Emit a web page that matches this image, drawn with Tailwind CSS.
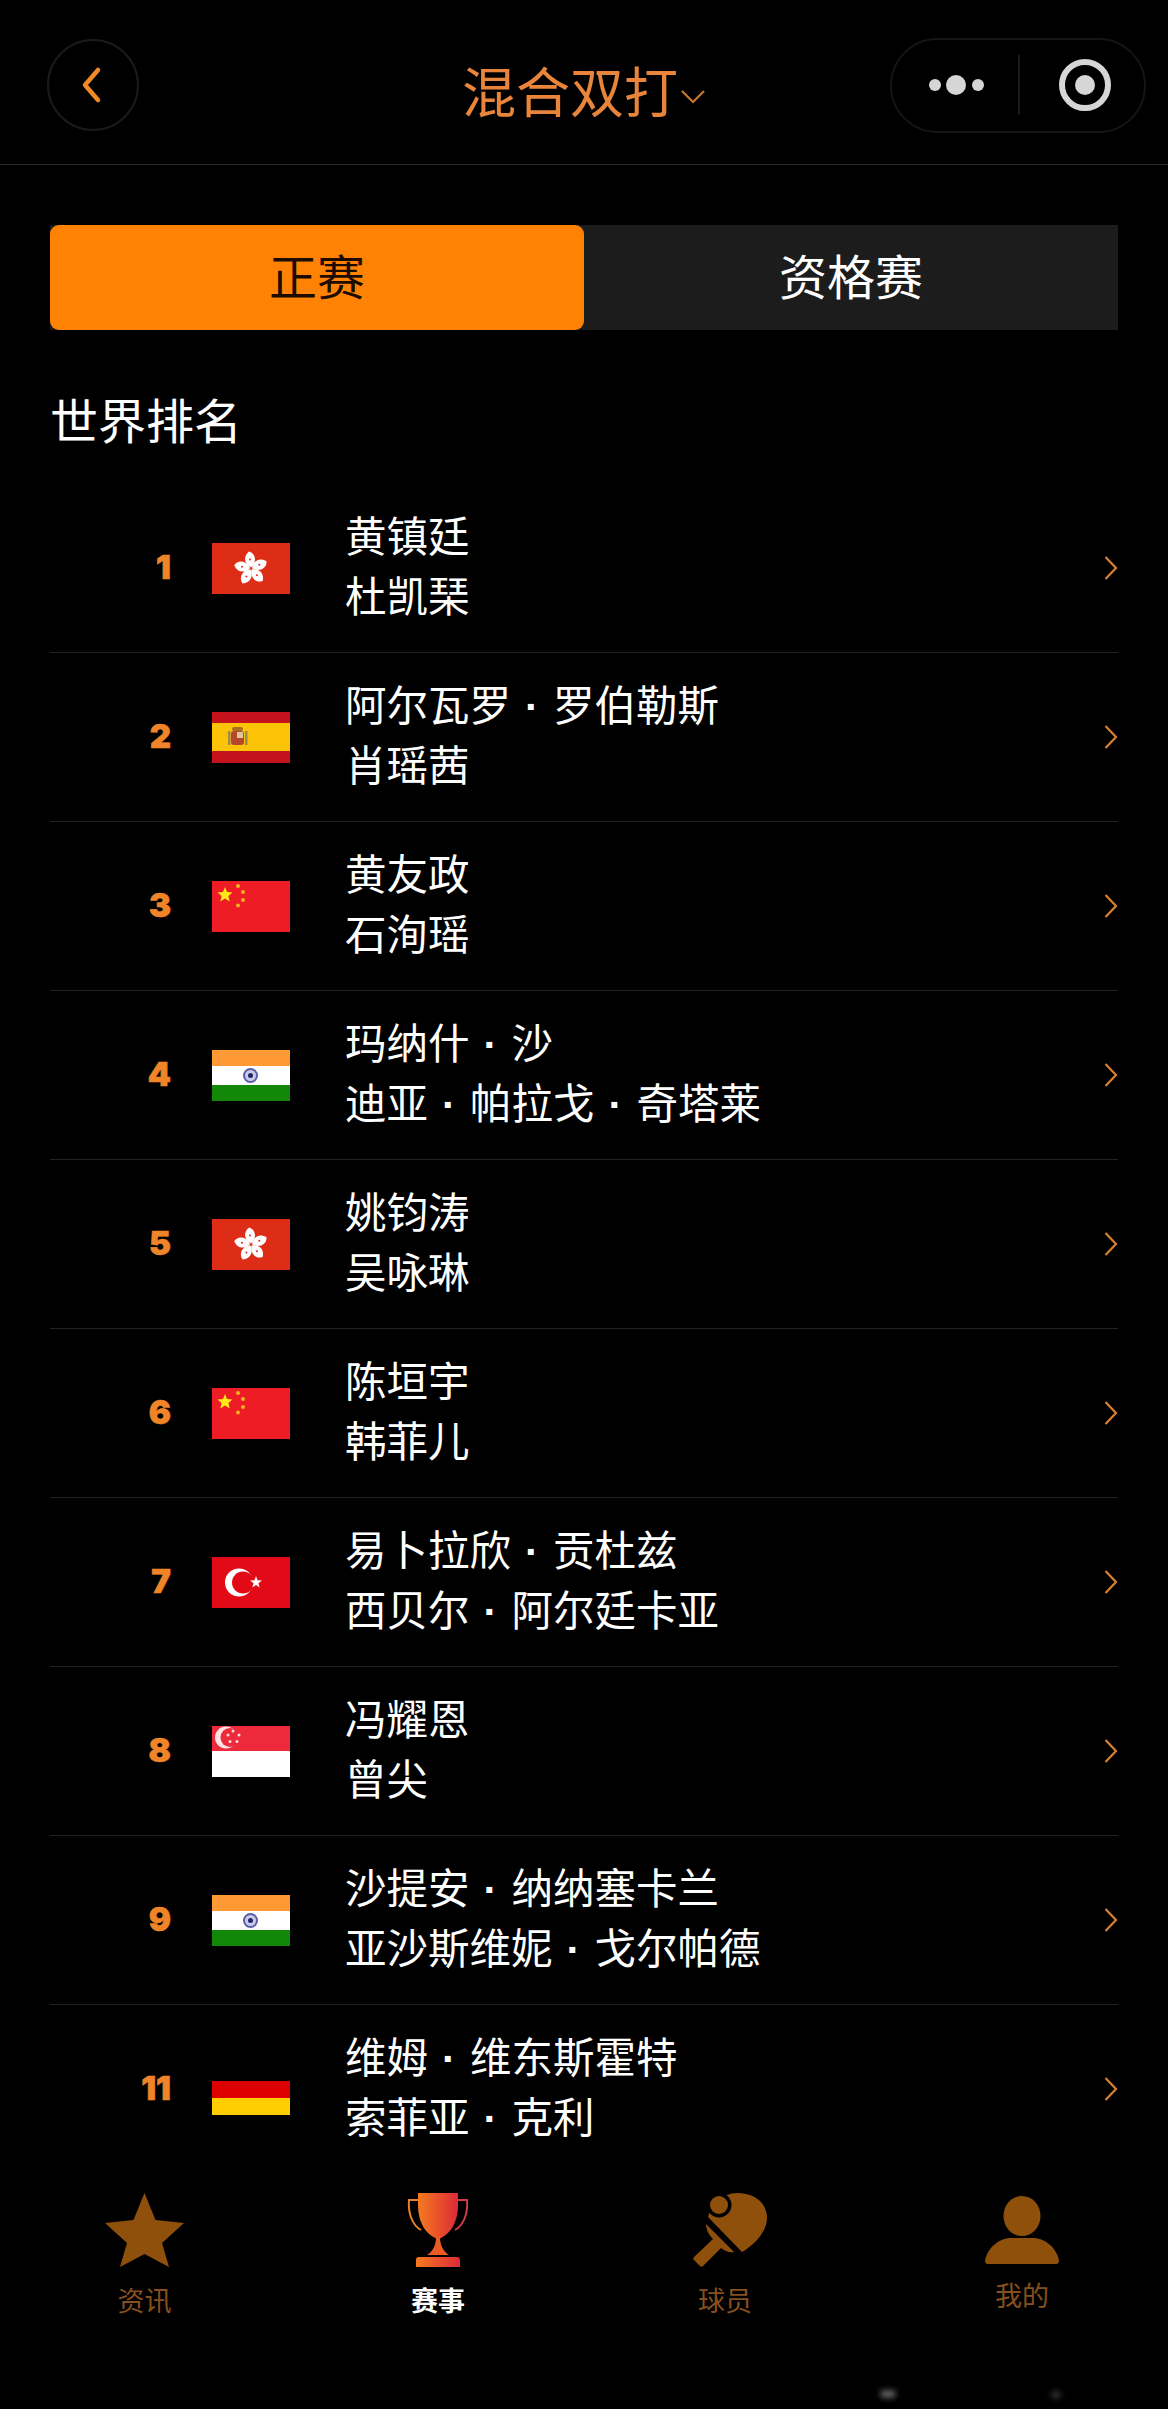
<!DOCTYPE html>
<html lang="zh-CN">
<head>
<meta charset="utf-8">
<script src="https://cdn.jsdelivr.net/npm/@tailwindcss/browser@4"></script>
</head>
<body class="bg-black">
<div class="w-[1168px] h-[2409px] bg-black flex flex-col overflow-hidden font-['Noto_Sans_CJK_SC','Noto_Sans',sans-serif] text-white">

  <!-- nav -->
  <header class="h-[165px] shrink-0 border-b border-[#2a2a2a] flex items-center justify-between pl-[47px] pr-[22px] pt-[6px] relative">
    <div class="w-[92px] h-[92px] rounded-full border-2 border-[#1a1a1a] flex items-center justify-center">
      <svg width="24" height="38" viewBox="0 0 24 38" fill="none"><path d="M17 4 4 19l13 15" stroke="#f08a24" stroke-width="4.5" stroke-linecap="round" stroke-linejoin="round"/></svg>
    </div>
    <div class="absolute left-[462px] top-[56px] flex items-center">
      <span class="text-[54px] leading-[68px] text-[#e8853a]">混合双打</span>
      <svg class="mt-[12px] ml-[2px]" width="26" height="16" viewBox="0 0 26 16" fill="none"><path d="M2 3 13 14 24 3" stroke="#c9762f" stroke-width="2.2"/></svg>
    </div>
    <div class="w-[256px] h-[95px] rounded-[48px] border-2 border-[#151515] flex items-center">
      <svg class="ml-[36px]" width="60" height="24" viewBox="0 0 60 24"><circle cx="7" cy="12" r="6" fill="#d6d6d6"/><circle cx="28" cy="12" r="10" fill="#d6d6d6"/><circle cx="50" cy="12" r="6" fill="#d6d6d6"/></svg>
      <div class="ml-[30px] w-[2px] h-[60px] bg-[#1a1a1a]"></div>
      <svg class="ml-[38px]" width="54" height="54" viewBox="0 0 54 54"><circle cx="27" cy="27" r="23" fill="none" stroke="#d6d6d6" stroke-width="6"/><circle cx="27" cy="27" r="10" fill="#d6d6d6"/></svg>
    </div>
  </header>

  <main class="flex-1 overflow-hidden px-[50px] pt-[60px]">
    <!-- tabs -->
    <div class="h-[105px] flex bg-[#1c1c1c] text-[48px]">
      <div class="w-[534px] rounded-[9px] bg-[#ff8205] text-[#1c0c00] flex items-center justify-center pb-[7px]">正赛</div>
      <div class="flex-1 flex items-center justify-center text-white pb-[7px]">资格赛</div>
    </div>
    <h2 class="mt-[56px] h-[64px] text-[48px] leading-[64px] font-normal">世界排名</h2>

    <ul class="mt-[34px]">
      <!-- 1 -->
      <li class="h-[169px] border-b border-[#222222] flex items-center">
        <span class="w-[121px] text-right text-[33px] font-black text-[#ef8428] [-webkit-text-stroke:0.6px_#ef8428] font-['Inter',sans-serif]">1</span>
        <svg class="ml-[41px] shrink-0" width="78" height="51" viewBox="0 0 78 51"><rect width="78" height="51" fill="#de2d16"/><g transform="translate(39 25.5)"><path d="M0-1C-7-5-8-12-2-17 5-15 6-6 0-1Z" fill="#fff"/><path transform="rotate(72)" d="M0-1C-7-5-8-12-2-17 5-15 6-6 0-1Z" fill="#fff"/><path transform="rotate(144)" d="M0-1C-7-5-8-12-2-17 5-15 6-6 0-1Z" fill="#fff"/><path transform="rotate(216)" d="M0-1C-7-5-8-12-2-17 5-15 6-6 0-1Z" fill="#fff"/><path transform="rotate(288)" d="M0-1C-7-5-8-12-2-17 5-15 6-6 0-1Z" fill="#fff"/><circle cx="-1" cy="-9" r="1" fill="#de2d16"/><circle cx="8.3" cy="-3.700" r="1" fill="#de2d16"/><circle cx="6" cy="6.800" r="1" fill="#de2d16"/><circle cx="-4.600" cy="8" r="1" fill="#de2d16"/><circle cx="-9" cy="-1.800" r="1" fill="#de2d16"/></g></svg>
        <div class="ml-[55px] flex-1 text-[41.5px] leading-[60px] mt-[-8px]"><p>黄镇廷</p><p>杜凯琹</p></div>
        <svg width="14" height="26" viewBox="0 0 14 26" fill="none"><path d="M1.500 2 12 13 1.500 24" stroke="#d8822f" stroke-width="2.200"/></svg>
      </li>
      <!-- 2 -->
      <li class="h-[169px] border-b border-[#222222] flex items-center">
        <span class="w-[121px] text-right text-[33px] font-black text-[#ef8428] [-webkit-text-stroke:0.6px_#ef8428] font-['Inter',sans-serif]">2</span>
        <svg class="ml-[41px] shrink-0" width="78" height="51" viewBox="0 0 78 51"><rect width="78" height="51" fill="#c4131c"/><rect y="11" width="78" height="28" fill="#fcc307"/><rect x="19" y="19" width="13" height="14" rx="3" fill="#b5482a"/><rect x="25" y="20" width="6" height="6" fill="#d9c7a0"/><rect x="20" y="15" width="11" height="4" rx="2" fill="#a8701e"/><rect x="16" y="19" width="2.500" height="14" fill="#9a8a55"/><rect x="33" y="19" width="2.500" height="14" fill="#9a8a55"/></svg>
        <div class="ml-[55px] flex-1 text-[41.5px] leading-[60px] mt-[-8px]"><p>阿尔瓦罗<span class="inline-block w-[42px] text-center leading-none font-bold font-['Liberation_Sans']">·</span>罗伯勒斯</p><p>肖瑶茜</p></div>
        <svg width="14" height="26" viewBox="0 0 14 26" fill="none"><path d="M1.500 2 12 13 1.500 24" stroke="#d8822f" stroke-width="2.200"/></svg>
      </li>
      <!-- 3 -->
      <li class="h-[169px] border-b border-[#222222] flex items-center">
        <span class="w-[121px] text-right text-[33px] font-black text-[#ef8428] [-webkit-text-stroke:0.6px_#ef8428] font-['Inter',sans-serif]">3</span>
        <svg class="ml-[41px] shrink-0" width="78" height="51" viewBox="0 0 78 51"><rect width="78" height="51" fill="#ee1c25"/><polygon points="13,6 15,11 20.5,11.5 16.4,15 17.7,20.5 13,17.5 8.3,20.5 9.6,15 5.5,11.5 11,11" fill="#ffe81a"/><circle cx="26" cy="5" r="2" fill="#f5b120"/><circle cx="31" cy="11" r="2" fill="#f5b120"/><circle cx="31" cy="19" r="2" fill="#f5b120"/><circle cx="26" cy="24.500" r="2" fill="#f5b120"/></svg>
        <div class="ml-[55px] flex-1 text-[41.5px] leading-[60px] mt-[-8px]"><p>黄友政</p><p>石洵瑶</p></div>
        <svg width="14" height="26" viewBox="0 0 14 26" fill="none"><path d="M1.500 2 12 13 1.500 24" stroke="#d8822f" stroke-width="2.200"/></svg>
      </li>
      <!-- 4 -->
      <li class="h-[169px] border-b border-[#222222] flex items-center">
        <span class="w-[121px] text-right text-[33px] font-black text-[#ef8428] [-webkit-text-stroke:0.6px_#ef8428] font-['Inter',sans-serif]">4</span>
        <svg class="ml-[41px] shrink-0" width="78" height="51" viewBox="0 0 78 51"><rect width="78" height="17" fill="#ff9933"/><rect y="16" width="78" height="19" fill="#fff"/><rect y="35" width="78" height="16" fill="#138808"/><circle cx="38.500" cy="25.500" r="6.500" fill="#c9cbe8" stroke="#5b5ea8" stroke-width="2"/><circle cx="38.500" cy="25.500" r="2.500" fill="#24246e"/></svg>
        <div class="ml-[55px] flex-1 text-[41.5px] leading-[60px] mt-[-8px]"><p>玛纳什<span class="inline-block w-[42px] text-center leading-none font-bold font-['Liberation_Sans']">·</span>沙</p><p>迪亚<span class="inline-block w-[42px] text-center leading-none font-bold font-['Liberation_Sans']">·</span>帕拉戈<span class="inline-block w-[42px] text-center leading-none font-bold font-['Liberation_Sans']">·</span>奇塔莱</p></div>
        <svg width="14" height="26" viewBox="0 0 14 26" fill="none"><path d="M1.500 2 12 13 1.500 24" stroke="#d8822f" stroke-width="2.200"/></svg>
      </li>
      <!-- 5 -->
      <li class="h-[169px] border-b border-[#222222] flex items-center">
        <span class="w-[121px] text-right text-[33px] font-black text-[#ef8428] [-webkit-text-stroke:0.6px_#ef8428] font-['Inter',sans-serif]">5</span>
        <svg class="ml-[41px] shrink-0" width="78" height="51" viewBox="0 0 78 51"><rect width="78" height="51" fill="#de2d16"/><g transform="translate(39 25.5)"><path d="M0-1C-7-5-8-12-2-17 5-15 6-6 0-1Z" fill="#fff"/><path transform="rotate(72)" d="M0-1C-7-5-8-12-2-17 5-15 6-6 0-1Z" fill="#fff"/><path transform="rotate(144)" d="M0-1C-7-5-8-12-2-17 5-15 6-6 0-1Z" fill="#fff"/><path transform="rotate(216)" d="M0-1C-7-5-8-12-2-17 5-15 6-6 0-1Z" fill="#fff"/><path transform="rotate(288)" d="M0-1C-7-5-8-12-2-17 5-15 6-6 0-1Z" fill="#fff"/><circle cx="-1" cy="-9" r="1" fill="#de2d16"/><circle cx="8.3" cy="-3.700" r="1" fill="#de2d16"/><circle cx="6" cy="6.800" r="1" fill="#de2d16"/><circle cx="-4.600" cy="8" r="1" fill="#de2d16"/><circle cx="-9" cy="-1.800" r="1" fill="#de2d16"/></g></svg>
        <div class="ml-[55px] flex-1 text-[41.5px] leading-[60px] mt-[-8px]"><p>姚钧涛</p><p>吴咏琳</p></div>
        <svg width="14" height="26" viewBox="0 0 14 26" fill="none"><path d="M1.500 2 12 13 1.500 24" stroke="#d8822f" stroke-width="2.200"/></svg>
      </li>
      <!-- 6 -->
      <li class="h-[169px] border-b border-[#222222] flex items-center">
        <span class="w-[121px] text-right text-[33px] font-black text-[#ef8428] [-webkit-text-stroke:0.6px_#ef8428] font-['Inter',sans-serif]">6</span>
        <svg class="ml-[41px] shrink-0" width="78" height="51" viewBox="0 0 78 51"><rect width="78" height="51" fill="#ee1c25"/><polygon points="13,6 15,11 20.5,11.5 16.4,15 17.7,20.5 13,17.5 8.3,20.5 9.6,15 5.5,11.5 11,11" fill="#ffe81a"/><circle cx="26" cy="5" r="2" fill="#f5b120"/><circle cx="31" cy="11" r="2" fill="#f5b120"/><circle cx="31" cy="19" r="2" fill="#f5b120"/><circle cx="26" cy="24.500" r="2" fill="#f5b120"/></svg>
        <div class="ml-[55px] flex-1 text-[41.5px] leading-[60px] mt-[-8px]"><p>陈垣宇</p><p>韩菲儿</p></div>
        <svg width="14" height="26" viewBox="0 0 14 26" fill="none"><path d="M1.500 2 12 13 1.500 24" stroke="#d8822f" stroke-width="2.200"/></svg>
      </li>
      <!-- 7 -->
      <li class="h-[169px] border-b border-[#222222] flex items-center">
        <span class="w-[121px] text-right text-[33px] font-black text-[#ef8428] [-webkit-text-stroke:0.6px_#ef8428] font-['Inter',sans-serif]">7</span>
        <svg class="ml-[41px] shrink-0" width="78" height="51" viewBox="0 0 78 51"><rect width="78" height="51" fill="#e30a17"/><circle cx="27" cy="25.500" r="14" fill="#fff"/><circle cx="31" cy="25.500" r="11" fill="#e30a17"/><polygon points="44,19 45.500,23.300 50,23.400 46.400,26.200 47.700,30.600 44,28 40.300,30.600 41.600,26.200 38,23.400 42.500,23.300" fill="#fff"/></svg>
        <div class="ml-[55px] flex-1 text-[41.5px] leading-[60px] mt-[-8px]"><p>易卜拉欣<span class="inline-block w-[42px] text-center leading-none font-bold font-['Liberation_Sans']">·</span>贡杜兹</p><p>西贝尔<span class="inline-block w-[42px] text-center leading-none font-bold font-['Liberation_Sans']">·</span>阿尔廷卡亚</p></div>
        <svg width="14" height="26" viewBox="0 0 14 26" fill="none"><path d="M1.500 2 12 13 1.500 24" stroke="#d8822f" stroke-width="2.200"/></svg>
      </li>
      <!-- 8 -->
      <li class="h-[169px] border-b border-[#222222] flex items-center">
        <span class="w-[121px] text-right text-[33px] font-black text-[#ef8428] [-webkit-text-stroke:0.6px_#ef8428] font-['Inter',sans-serif]">8</span>
        <svg class="ml-[41px] shrink-0" width="78" height="51" viewBox="0 0 78 51"><rect width="78" height="51" fill="#fff"/><rect width="78" height="25" fill="#ec2a3c"/><circle cx="14" cy="11.500" r="11" fill="#ffe4e6"/><circle cx="18" cy="11.500" r="9.500" fill="#ec2a3c"/><g fill="#ffd9dc"><circle cx="21" cy="5" r="1.500"/><circle cx="27" cy="9" r="1.500"/><circle cx="25" cy="15.500" r="1.500"/><circle cx="18" cy="15.500" r="1.500"/><circle cx="16" cy="9" r="1.500"/></g></svg>
        <div class="ml-[55px] flex-1 text-[41.5px] leading-[60px] mt-[-8px]"><p>冯耀恩</p><p>曾尖</p></div>
        <svg width="14" height="26" viewBox="0 0 14 26" fill="none"><path d="M1.500 2 12 13 1.500 24" stroke="#d8822f" stroke-width="2.200"/></svg>
      </li>
      <!-- 9 -->
      <li class="h-[169px] border-b border-[#222222] flex items-center">
        <span class="w-[121px] text-right text-[33px] font-black text-[#ef8428] [-webkit-text-stroke:0.6px_#ef8428] font-['Inter',sans-serif]">9</span>
        <svg class="ml-[41px] shrink-0" width="78" height="51" viewBox="0 0 78 51"><rect width="78" height="17" fill="#ff9933"/><rect y="16" width="78" height="19" fill="#fff"/><rect y="35" width="78" height="16" fill="#138808"/><circle cx="38.500" cy="25.500" r="6.500" fill="#c9cbe8" stroke="#5b5ea8" stroke-width="2"/><circle cx="38.500" cy="25.500" r="2.500" fill="#24246e"/></svg>
        <div class="ml-[55px] flex-1 text-[41.5px] leading-[60px] mt-[-8px]"><p>沙提安<span class="inline-block w-[42px] text-center leading-none font-bold font-['Liberation_Sans']">·</span>纳纳塞卡兰</p><p>亚沙斯维妮<span class="inline-block w-[42px] text-center leading-none font-bold font-['Liberation_Sans']">·</span>戈尔帕德</p></div>
        <svg width="14" height="26" viewBox="0 0 14 26" fill="none"><path d="M1.500 2 12 13 1.500 24" stroke="#d8822f" stroke-width="2.200"/></svg>
      </li>
      <!-- 11 -->
      <li class="h-[169px] border-b border-[#222222] flex items-center">
        <span class="w-[121px] text-right text-[33px] font-black text-[#ef8428] [-webkit-text-stroke:0.6px_#ef8428] font-['Inter',sans-serif]">11</span>
        <svg class="ml-[41px] shrink-0" width="78" height="51" viewBox="0 0 78 51"><rect width="78" height="17" fill="#000"/><rect y="17" width="78" height="17" fill="#dd0000"/><rect y="34" width="78" height="17" fill="#ffce00"/></svg>
        <div class="ml-[55px] flex-1 text-[41.5px] leading-[60px] mt-[-8px]"><p>维姆<span class="inline-block w-[42px] text-center leading-none font-bold font-['Liberation_Sans']">·</span>维东斯霍特</p><p>索菲亚<span class="inline-block w-[42px] text-center leading-none font-bold font-['Liberation_Sans']">·</span>克利</p></div>
        <svg width="14" height="26" viewBox="0 0 14 26" fill="none"><path d="M1.500 2 12 13 1.500 24" stroke="#d8822f" stroke-width="2.200"/></svg>
      </li>
    </ul>
  </main>

  <!-- tab bar -->
  <nav class="relative h-[259px] shrink-0 bg-black grid grid-cols-4 pt-[43px] text-[27px] leading-[36px] text-[#85501f]">
    <div class="flex flex-col items-center gap-[15px] pr-[3px]">
      <svg width="79" height="74" viewBox="0 0 79 74"><polygon points="39.500,0 50.500,27 79,30 57,50 64,74 39.500,61 15,74 22,50 0,30 28.500,27" fill="#8f500c"/></svg>
      <span>资讯</span>
    </div>
    <div class="flex flex-col items-center gap-[15px] text-white font-bold">
      <svg width="62" height="74" viewBox="0 0 62 74" fill="none">
        <defs><linearGradient id="g" x1="0" x2="1" y1="0" y2="0"><stop offset="0" stop-color="#f57a1f"/><stop offset="1" stop-color="#dc2a38"/></linearGradient></defs>
        <path d="M11 0H51V12C51 28 44 42 31 46 18 42 11 28 11 12Z" fill="url(#g)"/>
        <path d="M29 44H33C33 52 36 58 42 62H20C26 58 29 52 29 44Z" fill="#ec5a26"/>
        <path d="M12 64H50C52 64 53 65 53 67V74H9V67C9 65 10 64 12 64Z" fill="url(#g)"/>
        <path d="M11 7H2C1 20 5 32 14 37" stroke="#e4812a" stroke-width="2"/>
        <path d="M51 7H60C61 20 57 32 48 37" stroke="#d23a48" stroke-width="2"/>
      </svg>
      <span>赛事</span>
    </div>
    <div class="flex flex-col items-center gap-[15px]">
      <svg width="74" height="74" viewBox="0 0 74 74" fill="#8f500c">
        <path d="M15 24 49 59C62 52 74 38 74 25 74 10 62 0 44 0 30 0 18 12 15 24Z"/>
        <circle cx="26" cy="12" r="12.500" fill="#000"/>
        <circle cx="26" cy="12" r="9"/>
        <path d="M13 31 41 59C36 60 32 58 28 55L10 73C9 74 8 74 7 73L1 67C0 66 0 65 1 64L20 46C16 42 13 37 13 31Z"/>
      </svg>
      <span class="mr-[10px]">球员</span>
    </div>
    <div class="flex flex-col items-center gap-[15px] pt-[3px]">
      <svg width="74" height="68" viewBox="0 0 74 68" fill="#8f500c">
        <ellipse cx="37" cy="20" rx="18.500" ry="20"/>
        <path d="M0 65C2 52 14 42 26 42H48C60 42 72 52 74 65 74 67 73 68 71 68H3C1 68 0 67 0 65Z"/>
      </svg>
      <span class="mt-[-2px]">我的</span>
    </div>
    <div class="absolute left-[881px] top-[241px] w-[14px] h-[6px] bg-white/50 blur-[3px]"></div>
    <div class="absolute left-[1052px] top-[242px] w-[8px] h-[5px] bg-white/30 blur-[3px]"></div>
  </nav>
</div>
</body>
</html>
